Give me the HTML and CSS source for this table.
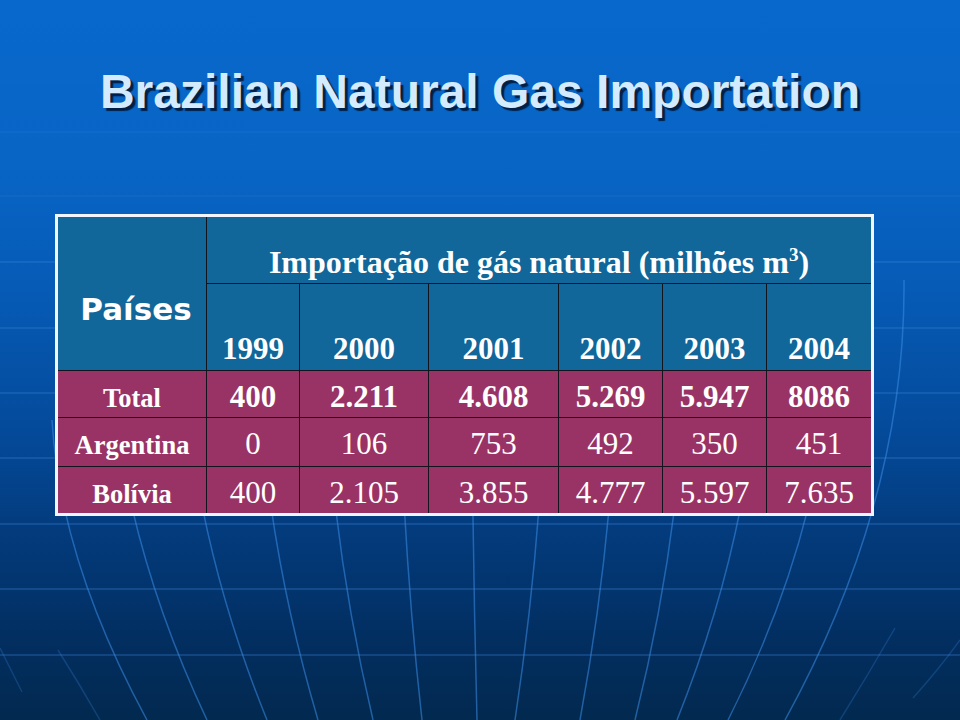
FILE: index.html
```html
<!DOCTYPE html>
<html lang="pt">
<head>
<meta charset="utf-8">
<title>Brazilian Natural Gas Importation</title>
<link rel="stylesheet" href="styles.css">
</head>
<body>
<div class="slide">
  <svg class="bg-grid" width="960" height="720" viewBox="0 0 960 720" aria-hidden="true">
    <g class="hlines top">
      <line x1="0" y1="132" x2="960" y2="132"/>
      <line x1="0" y1="196" x2="960" y2="196"/>
    </g>
    <g class="hlines">
      <line x1="0" y1="262" x2="960" y2="262"/>
      <line x1="0" y1="328" x2="960" y2="328"/>
      <line x1="0" y1="393" x2="960" y2="393"/>
      <line x1="0" y1="458" x2="960" y2="458"/>
      <line x1="0" y1="524" x2="960" y2="524"/>
      <line x1="0" y1="589" x2="960" y2="589"/>
      <line x1="0" y1="655" x2="960" y2="655"/>
    </g>
    <g class="meridians">
      <path d="M52,420 Q60,560 147,720"/>
      <path d="M107.8,300 Q107.8,510 207,720"/>
      <path d="M181.6,300 Q181.6,510 267,720"/>
      <path d="M256,300 Q256,510 318,720"/>
      <path d="M323.4,300 Q323.4,510 373,720"/>
      <path d="M398.6,300 Q398.6,510 422,720"/>
      <path d="M471.5,300 Q471.5,510 477,720"/>
      <path d="M546.7,300 Q546.7,510 515,720"/>
      <path d="M618.6,300 Q618.6,510 580,720"/>
      <path d="M687.4,300 Q687.4,510 635,720"/>
      <path d="M761.1,300 Q761.1,510 677,720"/>
      <path d="M834.1,300 Q834.1,510 728,720"/>
      <path d="M904,280 Q906,500 785,720"/>
    </g>
    <g class="faint">
      <path d="M0,648 Q10,668 22,692"/>
      <path d="M58,650 Q80,685 100,720"/>
      <path d="M960,640 Q940,668 913,698"/>
      <path d="M895,628 Q868,675 840,720"/>
    </g>
  </svg>

  <h1 class="title">Brazilian Natural Gas Importation</h1>

  <div class="table-wrap">
    <table class="gas">
      <colgroup>
        <col class="w-label">
        <col class="w-a">
        <col class="w-b">
        <col class="w-c">
        <col class="w-d">
        <col class="w-d">
        <col class="w-d">
      </colgroup>
      <tr class="r-h1">
        <th class="paises" rowspan="2">Países</th>
        <th class="caption last" colspan="6">Importação de gás natural (milhões m<sup class="sup">3</sup>)</th>
      </tr>
      <tr class="r-h2">
        <th class="year">1999</th>
        <th class="year">2000</th>
        <th class="year">2001</th>
        <th class="year">2002</th>
        <th class="year">2003</th>
        <th class="year last">2004</th>
      </tr>
      <tr class="r-total">
        <td class="label">Total</td>
        <td class="num strong">400</td>
        <td class="num strong">2.211</td>
        <td class="num strong">4.608</td>
        <td class="num strong">5.269</td>
        <td class="num strong">5.947</td>
        <td class="num strong last">8086</td>
      </tr>
      <tr class="r-arg">
        <td class="label">Argentina</td>
        <td class="num">0</td>
        <td class="num">106</td>
        <td class="num">753</td>
        <td class="num">492</td>
        <td class="num">350</td>
        <td class="num last">451</td>
      </tr>
      <tr class="r-bol">
        <td class="label">Bolívia</td>
        <td class="num">400</td>
        <td class="num">2.105</td>
        <td class="num">3.855</td>
        <td class="num">4.777</td>
        <td class="num">5.597</td>
        <td class="num last">7.635</td>
      </tr>
    </table>
  </div>
</div>
</body>
</html>
```

FILE: styles.css
```css
* {
  box-sizing: border-box;
}

html, body {
  margin: 0;
  padding: 0;
}

body {
  width: 960px;
  height: 720px;
  overflow: hidden;
  background: #022a58;
}

.slide {
  position: relative;
  width: 960px;
  height: 720px;
  overflow: hidden;
  padding-top: 68px;
  background: linear-gradient(180deg,
    #0868cc 0%,
    #0865c6 22%,
    #065bb6 40%,
    #044a9a 60%,
    #033a7a 75%,
    #022f62 88%,
    #02294f 100%);
}

.bg-grid {
  position: absolute;
  left: 0;
  top: 0;
  z-index: 0;
}

.hlines line {
  stroke: #3d86d6;
  stroke-opacity: 0.28;
  stroke-width: 2;
}

.hlines.top line {
  stroke-opacity: 0.14;
}

.meridians path {
  fill: none;
  stroke: #3b8ce6;
  stroke-opacity: 0.55;
  stroke-width: 1.5;
}

.faint path {
  fill: none;
  stroke: #3b8ce6;
  stroke-opacity: 0.25;
  stroke-width: 1.5;
}

.title {
  position: relative;
  z-index: 1;
  margin: 0;
  font-family: "Liberation Sans", Arial, sans-serif;
  font-weight: bold;
  font-size: 48px;
  line-height: 48px;
  text-align: center;
  color: #d3ebff;
  text-shadow: 3px 3px 1px rgba(2, 28, 64, 0.95);
}

.table-wrap {
  position: relative;
  z-index: 1;
  margin-top: 98px;
  padding-left: 55px;
}

.gas {
  border-collapse: separate;
  border-spacing: 0;
  table-layout: fixed;
  width: 819px;
  border: 3px solid #f2f5fb;
  color: #ffffff;
  font-family: "Liberation Serif", "Times New Roman", serif;
}

.w-label { width: 149px; }
.w-a { width: 93px; }
.w-b { width: 129px; }
.w-c { width: 130px; }
.w-d { width: 104px; }

.gas th,
.gas td {
  padding: 0;
  border-right: 1px solid #14141f;
  border-bottom: 1px solid #14141f;
  text-align: center;
  line-height: 1;
  white-space: nowrap;
}

.gas .last {
  border-right: none;
}

.gas tr:last-child td {
  border-bottom: none;
}

.r-h1, .r-h2 {
  background: #11669a;
}

.r-h1 { height: 67px; }
.r-h2 { height: 87px; }
.r-total { height: 47px; }
.r-arg { height: 49px; }
.r-bol { height: 46px; }

.r-total, .r-arg, .r-bol {
  background: #993366;
}

.paises {
  vertical-align: top;
  padding: 77px 0 0 8px !important;
  font-family: "DejaVu Sans", Verdana, sans-serif;
  font-weight: bold;
  font-size: 31px;
}

.caption {
  vertical-align: bottom;
  padding-bottom: 5px !important;
  font-weight: bold;
  font-size: 32px;
}

.sup {
  font-size: 0.6em;
  vertical-align: 0.6em;
  line-height: 0;
}

.year {
  vertical-align: bottom;
  padding-bottom: 6px !important;
  font-weight: bold;
  font-size: 31px;
}

.label {
  vertical-align: baseline;
  padding-top: 10px !important;
  font-weight: bold;
  font-size: 26.5px;
}

.num {
  vertical-align: baseline;
  padding-top: 10px !important;
  font-size: 31px;
  font-weight: normal;
}

.num.strong {
  font-weight: bold;
}
```
